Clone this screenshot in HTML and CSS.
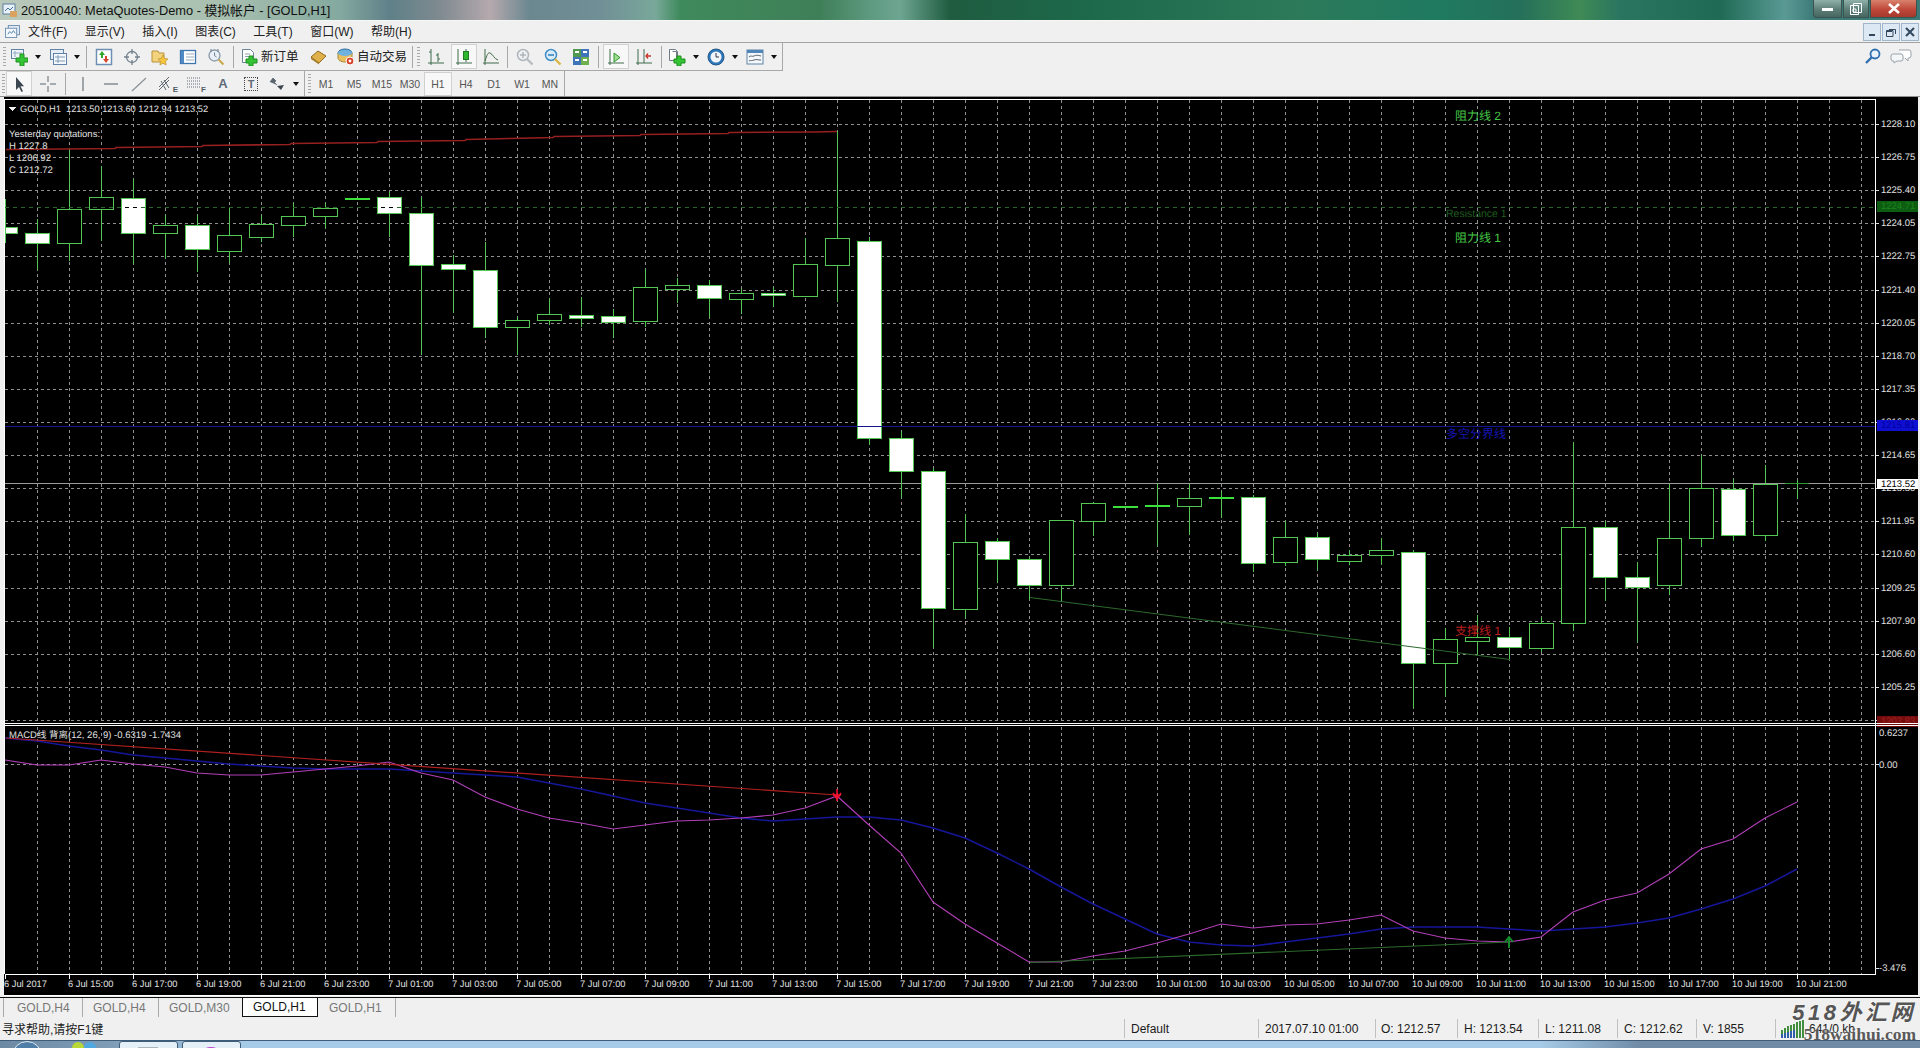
FILE: index.html
```html
<!DOCTYPE html>
<html lang="zh-CN">
<head>
  <meta charset="UTF-8" />
  <title>20510040: MetaQuotes-Demo - 模拟帐户 - [GOLD,H1]</title>
  <link rel="stylesheet" href="styles.css">
</head>
<body>

  <div class="titlebar">
    <svg class="app-icon" viewBox="0 0 16 16"><rect x="1" y="2" width="12" height="10" fill="#e8f0f8" stroke="#5f7f9f"/><path d="M3 9l3-3 2 2 3-3" fill="none" stroke="#3f6f9f"/><rect x="8" y="9" width="7" height="6" fill="#d9a35f"/></svg>
    <span class="title-text">20510040: MetaQuotes-Demo - 模拟帐户 - [GOLD,H1]</span>
    <div class="win-buttons">
      <span class="win-btn win-min"><i></i></span>
      <span class="win-btn win-max"><svg width="12" height="12" viewBox="0 0 12 12"><path d="M3.5 .5h8v9h-8zM.5 2.5h8v9h-8zM3 6h3v3H3z" fill="none" stroke="#fff"/></svg></span>
      <span class="win-btn win-close"><svg width="14" height="11" viewBox="0 0 14 11"><path d="M2 1l10 9M12 1L2 10" stroke="#fff" stroke-width="2.6"/></svg></span>
    </div>
  </div>

  <div class="menubar">
    <svg class="menu-icon" viewBox="0 0 16 14"><rect x="3.5" y=".5" width="12" height="10" fill="#dfe9f4" stroke="#6f8fb0"/><rect x=".5" y="3.5" width="12" height="10" fill="#f4f8fc" stroke="#6f8fb0"/><path d="M3 10l2-3 2 2 2-3 2 3" fill="none" stroke="#4f7fa8"/></svg>
    <span class="menu-item">文件(F)</span>
    <span class="menu-item">显示(V)</span>
    <span class="menu-item">插入(I)</span>
    <span class="menu-item">图表(C)</span>
    <span class="menu-item">工具(T)</span>
    <span class="menu-item">窗口(W)</span>
    <span class="menu-item">帮助(H)</span>
    <div class="mdi-buttons">
      <span class="mdi-btn"><svg width="10" height="10" viewBox="0 0 10 10"><rect x="2" y="7" width="6" height="2" fill="#33475c"/></svg></span>
      <span class="mdi-btn"><svg width="10" height="10" viewBox="0 0 10 10"><path d="M3 2.5h6.5v4.5M.5 3.5h6.5v6H.5z" fill="none" stroke="#33475c"/><rect x="1" y="4" width="5" height="1" fill="#33475c"/></svg></span>
      <span class="mdi-btn"><svg width="10" height="10" viewBox="0 0 10 10"><path d="M1 1l8 8M9 1L1 9" stroke="#33475c" stroke-width="2"/></svg></span>
    </div>
  </div>

  <div class="toolbar-row row-top">
    <div class="toolbar">
      <span class="grip"></span>
      <span class="btn btn-sm">
        <svg class="icon" viewBox="0 0 18 18"><rect x="1.500" y="1.500" width="12" height="9" fill="#eef4fa" stroke="#5f82a6"/><path d="M3 5h9M5 3v6" stroke="#8fa8c0"/><path d="M10 6h4v4h4v4h-4v4h-4v-4H6v-4h4z" fill="#35c435" stroke="#1c8f1c"/></svg>
      </span>
      <span class="caret"></span>
      <span class="spacer-2"></span>
      <span class="btn btn-sm">
        <svg class="icon" viewBox="0 0 18 18"><rect x="1.500" y="1.500" width="13" height="10" fill="#e6eef7" stroke="#5f82a6"/><rect x="4.500" y="5.500" width="13" height="11" fill="#f4f8fc" stroke="#5f82a6"/><path d="M6 9h10M6 13h10M9 7v8" stroke="#7f9bb8"/></svg>
      </span>
      <span class="caret"></span>
      <span class="sep"></span>
      <span class="btn">
        <svg class="icon" viewBox="0 0 18 18"><rect x="1.500" y="1.500" width="15" height="15" fill="#fff" stroke="#6d8fb3" stroke-width="1.500"/><path d="M7 3l3 4H8v3H6V7H4z" fill="#2ea82e"/><path d="M11 15l-3-4h2V8h2v3h2z" fill="#d5452f"/></svg>
      </span>
      <span class="btn">
        <svg class="icon" viewBox="0 0 18 18"><circle cx="9" cy="9" r="5.500" fill="none" stroke="#74808c" stroke-width="1.300"/><path d="M9 1v5M9 12v5M1 9h5M12 9h5" stroke="#74808c" stroke-width="1.300"/></svg>
      </span>
      <span class="btn">
        <svg class="icon" viewBox="0 0 18 18"><path d="M1 3h6l1 2h5v9H1z" fill="#f2d27a" stroke="#b8923c"/><path d="M12 7l1.600 3.400 3.400.5-2.500 2.400.6 3.700-3.100-1.800-3.100 1.800.6-3.700L7 10.900l3.400-.5z" fill="#f5c63c" stroke="#b8923c" stroke-width=".7"/></svg>
      </span>
      <span class="btn">
        <svg class="icon" viewBox="0 0 18 18"><rect x="1.500" y="2.500" width="15" height="13" fill="#fff" stroke="#3f78b0" stroke-width="1.300"/><rect x="2" y="3" width="3" height="12" fill="#4f8ac4"/><path d="M7 6h8M7 9h8M7 12h8" stroke="#9aa9b8"/></svg>
      </span>
      <span class="btn">
        <svg class="icon" viewBox="0 0 18 18"><circle cx="7.500" cy="7.500" r="5.500" fill="#e8eff6" stroke="#8a9aa8" stroke-width="1.300"/><path d="M4 1v3M11 1v3" stroke="#6d7f90"/><path d="M7.500 4.500v3l2 1.500" fill="none" stroke="#6d7f90"/><path d="M11.500 11.500l5 5" stroke="#c9a84a" stroke-width="2"/></svg>
      </span>
      <span class="sep"></span>
      <span class="btn btn-text">
        <svg class="icon" viewBox="0 0 18 18"><path d="M1.500 1.500h8l3 3v10h-11z" fill="#fff" stroke="#6d8499"/><path d="M4 6h5M4 8.500h5" stroke="#8fa0b0"/><path d="M8 8h4v3h4v4h-4v3H8v-3H5v-4h3z" fill="#35c435" stroke="#1c8f1c"/></svg>
        <span>新订单</span>
      </span>
      <span class="btn">
        <svg class="icon" viewBox="0 0 18 18"><path d="M1 9l7-6 8 5-7 7z" fill="#e0b04a" stroke="#8f6c20"/><path d="M1 9l8 6 0 1.500L1 11z" fill="#a87d28"/></svg>
      </span>
      <span class="btn btn-text btn-auto">
        <svg class="icon" viewBox="0 0 18 18"><ellipse cx="8" cy="5" rx="7" ry="4" fill="#5ea6d8" stroke="#33709f"/><path d="M1 5v5c0 2 3 4 7 4s7-2 7-4V5" fill="#e8c060" stroke="#a5862f"/><ellipse cx="8" cy="5" rx="7" ry="3" fill="#6fb2e0"/><circle cx="13" cy="13" r="4" fill="#d8422a" stroke="#fff"/><circle cx="13" cy="13" r="1.400" fill="#fff"/></svg>
        <span>自动交易</span>
      </span>
      <span class="sep"></span>
      <span class="grip grip-inner"></span>
      <span class="btn">
        <svg class="icon" viewBox="0 0 18 18"><path d="M4 1v16M1 15h16M4 4H2M11 5v9M11 7H9M11 11h2" fill="none" stroke="#3f6b4a"/></svg>
      </span>
      <span class="btn btn-on">
        <svg class="icon" viewBox="0 0 18 18"><path d="M3 1v16M1 15h16M11 1v13" fill="none" stroke="#3f6b4a"/><rect x="8.500" y="3.500" width="5" height="8" fill="#2fb82f" stroke="#1d7f1d"/></svg>
      </span>
      <span class="btn btn-narrow">
        <svg class="icon" viewBox="0 0 18 18"><path d="M3 1v16M1 15h16M3 13c2-6 3-9 5-8 3 1 4 6 8 7" fill="none" stroke="#3f6b4a"/></svg>
      </span>
      <span class="sep"></span>
      <span class="btn">
        <svg class="icon" viewBox="0 0 18 18"><circle cx="7" cy="7" r="5.500" fill="#eef0f2" stroke="#b0b6bb" stroke-width="1.500"/><path d="M4 7h6M7 4v6" stroke="#b0b6bb" stroke-width="1.500"/><path d="M11 11l5.500 5.500" stroke="#b8bcc0" stroke-width="2.400"/></svg>
      </span>
      <span class="btn">
        <svg class="icon" viewBox="0 0 18 18"><circle cx="7" cy="7" r="5.500" fill="#d8ecf9" stroke="#3f8ec6" stroke-width="1.500"/><path d="M4 7h6" stroke="#2f7fb8" stroke-width="1.500"/><path d="M11 11l5.500 5.500" stroke="#d9b84a" stroke-width="2.400"/></svg>
      </span>
      <span class="btn">
        <svg class="icon" viewBox="0 0 18 18"><rect x="1" y="1" width="8" height="8" fill="#4f9a4f"/><rect x="9" y="1" width="8" height="8" fill="#3f74b8"/><rect x="1" y="9" width="8" height="8" fill="#3f74b8"/><rect x="9" y="9" width="8" height="8" fill="#6fb04f"/><path d="M3 4h4M11 4h4M3 12h4M11 12h4" stroke="#fff" stroke-width="2"/></svg>
      </span>
      <span class="sep"></span>
      <span class="btn btn-on">
        <svg class="icon" viewBox="0 0 18 18"><path d="M3 1v16M1 15h16" fill="none" stroke="#3f6b4a"/><path d="M7 5l6 4.500L7 14z" fill="#9fdc8f" stroke="#2f9a2f"/></svg>
      </span>
      <span class="btn">
        <svg class="icon" viewBox="0 0 18 18"><path d="M3 1v16M1 15h16M9 1v14" fill="none" stroke="#3f6b4a"/><path d="M16 8l-5 0M13 5.500l-2 2.500 2 2.500" fill="none" stroke="#c8352a" stroke-width="1.300"/></svg>
      </span>
      <span class="sep"></span>
      <span class="btn btn-sm">
        <svg class="icon" viewBox="0 0 18 18"><path d="M1.500 1.500h6l2 2v9h-8z" fill="#fff" stroke="#6d7c88"/><path d="M4.500 3.500h4v8" fill="none" stroke="#6d7c88"/><path d="M9 8h4v3h4v4h-4v3H9v-3H6v-4h3z" fill="#35c435" stroke="#1c8f1c"/></svg>
      </span>
      <span class="caret"></span>
      <span class="spacer-2"></span>
      <span class="btn btn-sm">
        <svg class="icon" viewBox="0 0 18 18"><circle cx="9" cy="9" r="8" fill="#2f78b8" stroke="#1f5688"/><circle cx="9" cy="9" r="5.500" fill="#f2f6fa"/><path d="M9 5v4h3" fill="none" stroke="#334"/></svg>
      </span>
      <span class="caret"></span>
      <span class="spacer-2"></span>
      <span class="btn btn-sm">
        <svg class="icon" viewBox="0 0 18 18"><rect x="1" y="2" width="16" height="14" fill="#f4f8fc" stroke="#5f82a6"/><rect x="1" y="2" width="16" height="3" fill="#4f86b8"/><path d="M3 9c2-2 3 0 5-1s3-1 7 0M3 13c2-1 3 0 5-1s4 0 7 0" fill="none" stroke="#55606a"/></svg>
      </span>
      <span class="caret"></span>
    </div>
    <div class="tools-right">
      <svg class="icon" viewBox="0 0 18 18"><circle cx="11" cy="7" r="4.500" fill="#eaf3fb" stroke="#2f6fb0" stroke-width="1.800"/><path d="M8 10l-6 6" stroke="#2f6fb0" stroke-width="2.400"/></svg>
      <svg class="icon-bubbles" viewBox="0 0 22 16"><path d="M9 2h10a2 2 0 0 1 2 2v4a2 2 0 0 1-2 2h-1v3l-3-3" fill="#fff" stroke="#9aa3aa"/><path d="M3 6h8a2 2 0 0 1 2 2v3a2 2 0 0 1-2 2H7l-3 2v-2H3a2 2 0 0 1-2-2V8a2 2 0 0 1 2-2z" fill="#f4f6f7" stroke="#9aa3aa"/></svg>
    </div>
  </div>

  <div class="toolbar-row row-bottom">
    <div class="toolbar">
      <span class="grip"></span>
      <span class="btn btn-on btn-cursor">
        <svg class="icon" viewBox="0 0 18 18"><path d="M6 2v13l3-3 2.500 5 1.500-.7-2.500-5H14z" fill="#3b4650"/></svg>
      </span>
      <span class="btn">
        <svg class="icon" viewBox="0 0 18 18"><path d="M9 1v6M9 11v6M1 9h6M11 9h6" stroke="#5c6670"/></svg>
      </span>
      <span class="sep"></span>
      <span class="btn"><svg class="icon" viewBox="0 0 18 18"><path d="M9 2v14" stroke="#6a727a" stroke-width="1.200"/></svg></span>
      <span class="btn"><svg class="icon" viewBox="0 0 18 18"><path d="M2 9h14" stroke="#6a727a" stroke-width="1.200"/></svg></span>
      <span class="btn"><svg class="icon" viewBox="0 0 18 18"><path d="M2 16L16 3" stroke="#8a9198" stroke-width="1.200"/></svg></span>
      <span class="btn btn-letter"><svg class="icon" viewBox="0 0 18 18"><path d="M1 12L11 2M1 15L11 5M3 6l5 9M6 5l5 8" stroke="#5c6670" fill="none"/></svg><b>E</b></span>
      <span class="btn btn-letter"><svg class="icon" viewBox="0 0 18 18"><path d="M1 3h13M1 6h13M1 9h13M1 12h13" stroke="#666d74" stroke-dasharray="1 1"/></svg><b>F</b></span>
      <span class="btn btn-a">A</span>
      <span class="btn btn-t"><span>T</span></span>
      <span class="btn btn-sm">
        <svg class="icon" viewBox="0 0 18 18"><path d="M2 7l3-4 3 3-2 1 3 3" fill="#5c6670" stroke="#3b4650" stroke-width=".6"/><path d="M9 11l7-1-3 5z" fill="#3b4650"/></svg>
      </span>
      <span class="caret"></span>
    </div>
    <div class="toolbar toolbar-periods">
      <span class="grip"></span>
      <span class="tf">M1</span>
      <span class="tf">M5</span>
      <span class="tf">M15</span>
      <span class="tf">M30</span>
      <span class="tf tf-on">H1</span>
      <span class="tf">H4</span>
      <span class="tf">D1</span>
      <span class="tf">W1</span>
      <span class="tf">MN</span>
    </div>
  </div>

  <div class="workspace">
    <svg id="chart" class="chart" viewBox="4 97 1914 899"></svg>
  </div>

  <div class="tabs">
    <span class="tab tab-first">GOLD,H4</span>
    <span class="tab tab-h4">GOLD,H4</span>
    <span class="tab tab-m30">GOLD,M30</span>
    <span class="tab tab-on">GOLD,H1</span>
    <span class="tab tab-last">GOLD,H1</span>
  </div>

  <div class="statusbar">
    <span class="status-help">寻求帮助,请按F1键</span>
    <span class="cell cell-profile">Default</span>
    <span class="cell cell-date">2017.07.10 01:00</span>
    <span class="cell cell-o">O: 1212.57</span>
    <span class="cell cell-h">H: 1213.54</span>
    <span class="cell cell-l">L: 1211.08</span>
    <span class="cell cell-c">C: 1212.62</span>
    <span class="cell cell-v">V: 1855</span>
    <span class="cell cell-conn">
      <svg width="23" height="20" viewBox="0 0 23 20"><path d="M1 19V11M4 19V9M7 19V7M10 19V6M13 19V5M16 19V3M19 19V2M22 19V1" stroke="#3f8f3f" stroke-width="2"/><path d="M1 19v-4M4 19v-5M7 19v-6M10 19v-7M13 19v-8" stroke="#2f5fa8" stroke-width="2"/></svg>
      <span>641/0 kb</span>
    </span>
    <div class="watermark">
      <span class="wm-cn">518外汇网</span>
      <span class="wm-en">518waihui.com</span>
    </div>
  </div>

  <div class="taskbar">
    <span class="start-orb"></span>
    <span class="quick-dot dot-green"></span>
    <span class="quick-dot dot-blue"></span>
    <span class="task-btn"><i class="task-glyph glyph-grey"></i></span>
    <span class="task-btn"><i class="task-glyph glyph-pink"></i></span>
  </div>

  <script src="chart.js"></script>
</body>
</html>
```

FILE: styles.css
```css
* {
  box-sizing: border-box;
}

body {
  margin: 0;
  width: 1920px;
  height: 1048px;
  overflow: hidden;
  display: flex;
  flex-direction: column;
  background: #f0f0f0;
  font-family: "Liberation Sans", "Noto Sans CJK SC", sans-serif;
  color: #1a1a1a;
}

/* window title */
.titlebar {
  height: 21px;
  flex: none;
  display: flex;
  align-items: center;
  border-bottom: 1px solid #f4f8f4;
  background: linear-gradient(90deg, #b8c8ba 0, #a9c0b0 220px, #84a99f 340px, #5f8088 390px, #7f8a90 440px, #b5a9ad 490px, #6b8790 530px, #718f96 600px, #79a89a 655px, #3f8a5c 680px, #3f7f58 820px, #5d9a80 870px, #6ea592 900px, #1f5c40 950px, #1d6a4c 1100px, #2c7a5a 1300px, #1f7a60 1440px, #25705a 1520px, #3f8a55 1580px, #2a7560 1620px, #1f6a55 1720px, #5a9a95 1785px, #3c7a78 1814px);
}

.app-icon {
  width: 16px;
  height: 16px;
  margin-left: 2px;
}

.title-text {
  margin-left: 3px;
  padding-top: 1px;
  font-size: 12.8px;
  line-height: 20px;
  color: #111;
}

.win-buttons {
  margin-left: auto;
  margin-right: 3px;
  display: flex;
  height: 18px;
  align-self: flex-start;
  gap: 1px;
}

.win-btn {
  display: flex;
  align-items: center;
  justify-content: center;
  height: 18px;
  border: 1px solid #3a5450;
  border-top: none;
}

.win-min {
  width: 29px;
  border-radius: 0 0 0 4px;
  background: linear-gradient(#8fb0a8, #5d7f78 55%, #47665f);
}

.win-min i {
  display: block;
  width: 11px;
  height: 3px;
  margin-top: 2px;
  background: #fff;
}

.win-max {
  width: 26px;
  background: linear-gradient(#8fb0a8, #5d7f78 55%, #47665f);
}

.win-close {
  width: 47px;
  border-radius: 0 0 4px 0;
  background: linear-gradient(#d8826c, #c0483a 55%, #a4392c);
}

/* menu */
.menubar {
  height: 22px;
  flex: none;
  display: flex;
  align-items: center;
  border-bottom: 1px solid #a3a3a3;
  background: #f0f0f0;
  padding-left: 5px;
  font-size: 12px;
}

.menu-icon {
  width: 15px;
  height: 13px;
  margin-right: 8px;
}

.menu-item {
  margin-right: 17.500px;
  margin-top: -2px;
  white-space: nowrap;
  color: #222;
}

.mdi-buttons {
  margin-left: auto;
  display: flex;
  gap: 1px;
  margin-right: 1px;
}

.mdi-btn {
  display: flex;
  align-items: center;
  justify-content: center;
  width: 18px;
  height: 18px;
  border: 1px solid #9fb6cc;
  background: #dce8f4;
}

/* toolbars */
.toolbar-row {
  flex: none;
  display: flex;
  background: #f0f0f0;
  justify-content: flex-start;
}

.row-top {
  height: 28px;
}

.row-bottom {
  height: 26px;
  border-bottom: 1px solid #8f8f8f;
}

.toolbar {
  display: flex;
  align-items: center;
  padding-left: 3px;
  border-right: 1px solid #a8a8a8;
}

.row-top .toolbar {
  border-bottom: 1px solid #a8a8a8;
  width: 783px;
}

.row-bottom .toolbar {
  width: 305px;
  padding-left: 2px;
}

.row-bottom .toolbar-periods {
  width: 260px;
  padding-left: 3px;
}

.grip {
  flex: none;
  width: 3px;
  height: 19px;
  margin-right: 1px;
  background: repeating-linear-gradient(#a8a8a8 0, #a8a8a8 1px, transparent 1px, transparent 3px);
}

.grip-inner {
  margin: 0 2px 0 1px;
}

.btn {
  flex: none;
  display: flex;
  align-items: center;
  justify-content: center;
  position: relative;
  width: 28px;
  height: 25px;
}

.btn-sm {
  width: 24px;
}

.btn-narrow {
  width: 26px;
}

.btn-on {
  background: #f8f8f8;
  border: 1px solid #d0d0d0;
  width: 26px;
  margin: 0 1px;
}

.btn-cursor {
  margin: 0 2px 0 0;
}

.icon {
  width: 18px;
  height: 18px;
}

.caret {
  flex: none;
  width: 13px;
  display: flex;
  justify-content: center;
}

.caret::after {
  content: "";
  border-top: 4px solid #111;
  border-left: 3.500px solid transparent;
  border-right: 3.500px solid transparent;
}

.spacer-2 {
  width: 2px;
  flex: none;
}

.sep {
  flex: none;
  width: 7px;
  height: 22px;
  background: linear-gradient(#a8a8a8, #a8a8a8) center / 1px 100% no-repeat;
}

.btn-text {
  width: 68px;
  justify-content: flex-start;
  padding-left: 4px;
  font-size: 12.5px;
  gap: 2px;
  color: #222;
}

.btn-text span {
  margin-top: -2px;
}

.btn-auto {
  width: 76px;
  padding-left: 4px;
}

.btn-letter b {
  position: absolute;
  right: 3px;
  bottom: 2px;
  font-size: 8px;
  font-weight: bold;
  color: #4f5a64;
}

.btn-a {
  font-size: 13px;
  font-weight: bold;
  color: #5f6a78;
}

.btn-t span {
  width: 14px;
  height: 14px;
  display: flex;
  align-items: center;
  justify-content: center;
  border: 1px dotted #444;
  font-size: 11px;
  font-weight: bold;
  color: #5f6a78;
}

.tf {
  flex: none;
  width: 28px;
  height: 24px;
  display: flex;
  align-items: center;
  justify-content: center;
  font-size: 10.5px;
  color: #555;
}

.tf-on {
  background: #f8f8f8;
  border: 1px solid #d0d0d0;
}

.toolbar-periods .grip {
  margin-right: 1px;
}

.tools-right {
  margin-left: auto;
  display: flex;
  align-items: center;
  gap: 8px;
  padding-right: 8px;
  height: 26px;
}

.icon-bubbles {
  width: 22px;
  height: 16px;
}

/* chart area */
.workspace {
  flex: none;
  height: 900px;
  padding: 0 2px 1px 4px;
  background: #f0f0f0;
  border-left: 1px solid transparent;
}

.chart {
  display: block;
  width: 1914px;
  height: 899px;
  margin-left: -1px;
  background: #000;
  font-family: "Liberation Sans", "Noto Sans CJK SC", sans-serif;
  shape-rendering: crispEdges;
  text-rendering: geometricPrecision;
}

.chart text {
  font-size: 9.5px;
  fill: #e0e0e0;
}

.chart .label-cn {
  font-size: 12px;
}

.chart .curve {
  shape-rendering: auto;
  fill: none;
}

/* tabs */
.tabs {
  height: 20px;
  flex: none;
  display: flex;
  border-top: 1px solid #111;
  padding-left: 3px;
  font-size: 12px;
  background: #f0f0f0;
}

.tab {
  flex: none;
  display: flex;
  align-items: center;
  height: 19px;
  padding-left: 10px;
  color: #777;
  border-left: 1px solid #aaa;
}

.tab-first {
  width: 79px;
  padding-left: 13px;
}

.tab-h4 {
  width: 76px;
}

.tab-m30 {
  width: 84px;
}

.tab-on {
  width: 76px;
  background: #fff;
  color: #111;
  border-left: 1px solid #111;
  border-right: 1px solid #111;
  border-bottom: 1px solid #111;
}

.tab-last {
  width: 78px;
  padding-left: 11px;
  border-left: none;
  border-right: 1px solid #aaa;
}

/* status */
.statusbar {
  height: 23px;
  flex: none;
  position: relative;
  display: flex;
  align-items: center;
  font-size: 12px;
  padding-left: 2px;
  background: #f0f0f0;
}

.status-help {
  width: 1122px;
  color: #222;
}

.cell {
  display: flex;
  align-items: center;
  height: 19px;
  padding-left: 6px;
  border-left: 1px solid #c0c0c0;
  white-space: nowrap;
}

.cell-profile {
  width: 134px;
}

.cell-date {
  width: 117px;
}

.cell-o {
  width: 82px;
  padding-left: 5px;
}

.cell-h {
  width: 81px;
}

.cell-l {
  width: 79px;
}

.cell-c {
  width: 79px;
}

.cell-v {
  width: 79px;
}

.cell-conn {
  gap: 5px;
  padding-left: 5px;
  flex: 1;
}

.watermark {
  position: absolute;
  right: 4px;
  top: -15px;
  width: 132px;
  display: flex;
  flex-direction: column;
  align-items: flex-end;
}

.wm-cn {
  font-size: 22px;
  line-height: 22px;
  font-style: italic;
  font-weight: bold;
  letter-spacing: 3.500px;
  color: #555;
  text-shadow: 0 0 2px #fff;
}

.wm-en {
  margin-top: 3px;
  font-family: "Liberation Serif", serif;
  font-size: 17.500px;
  line-height: 14px;
  font-weight: bold;
  color: #5a5a5a;
  text-shadow: 0 0 2px #fff;
}

/* windows taskbar */
.taskbar {
  flex: 1;
  position: relative;
  display: flex;
  border-top: 1px solid #3f5c78;
  background: linear-gradient(90deg, #6c8aa4 0, #7f9cb6 110px, #a6cbe8 240px, #a6cbe8 1540px, #6f8ba6 1640px, #6f8ba6 1920px);
}

.start-orb {
  position: absolute;
  left: 12px;
  top: 0;
  width: 30px;
  height: 30px;
  border-radius: 50%;
  border: 1px solid #dfe8f0;
  background: #4f7fa8;
}

.quick-dot {
  position: absolute;
  top: 1px;
  width: 12px;
  height: 12px;
  border-radius: 50%;
}

.dot-green {
  left: 72px;
  background: #b8d838;
}

.dot-blue {
  left: 84px;
  background: #4fa8e0;
}

.task-btn {
  position: absolute;
  top: 0;
  width: 59px;
  height: 12px;
  border: 1px solid #3f5c78;
  border-radius: 3px 3px 0 0;
  background: #e4eff8;
}

.task-btn:nth-of-type(4) {
  left: 119px;
}

.task-btn:nth-of-type(5) {
  left: 182px;
}

.task-glyph {
  position: absolute;
  top: 5px;
  left: 18px;
  width: 20px;
  height: 8px;
}

.glyph-grey {
  background: #aab4bc;
}

.glyph-pink {
  border-radius: 50%;
  height: 14px;
  background: #c040d0;
}
```

FILE: chart.js
```js
const svg = document.getElementById('chart');
const NS = 'http://www.w3.org/2000/svg';

function add(tag, attrs, text) {
  const el = document.createElementNS(NS, tag);
  for (const k in attrs) el.setAttribute(k, attrs[k]);
  if (text !== undefined) el.textContent = text;
  svg.appendChild(el);
  return el;
}

function hLine(y, x1, x2, color, dash) {
  add('line', { x1, x2, y1: y + 0.5, y2: y + 0.5, stroke: color, 'stroke-dasharray': dash || 'none' });
}

function vLine(x, y1, y2, color, dash) {
  add('line', { x1: x + 0.5, x2: x + 0.5, y1, y2, stroke: color, 'stroke-dasharray': dash || 'none' });
}

function label(x, y, text, extra) {
  add('text', Object.assign({ x, y, 'dominant-baseline': 'central' }, extra), text);
}

const LEFT = 5, RIGHT = 1875, STEP = 32;
const GRID = '#909090', DASH = '3 3';
const GREEN = '#52c852';

// grid, top pane and macd pane
const prices = ['1228.10', '1226.75', '1225.40', '1224.05', '1222.75', '1221.40', '1220.05', '1218.70', '1217.35',
  '1216.00', '1214.65', '1213.30', '1211.95', '1210.60', '1209.25', '1207.90', '1206.60', '1205.25', '1203.90'];

prices.forEach((p, k) => {
  const y = Math.round(124 + 33.11 * k);
  hLine(y, LEFT, RIGHT, GRID, DASH);
  hLine(y, RIGHT, RIGHT + 4, '#ddd');
  if (k < 18) label(1881, y + 0.5, p);
});

for (let i = 1; i <= 58; i++) {
  const x = LEFT + STEP * i;
  vLine(x, 100, 722, GRID, DASH);
  vLine(x, 727, 974, GRID, DASH);
}

// current price sits behind the candles
hLine(483, LEFT, RIGHT, '#9a9a9a');

// yesterday's high line
add('polyline', {
  points: '6,149.500 115,148.500 116,147.500 202,146.500 203,145.500 290,144.500 291,143.500 377,142.500 378,141.500 465,140.500 466,139.500 553,137.500 554,136.500 640,135.500 641,134.500 728,133.500 729,132.500 815,132 837,131.500',
  class: 'curve', stroke: '#961f1f', 'stroke-width': 1.600
});

// [index, high, low, body top, body bottom, filled]
const candles = [
  [0, 199, 243, 227, 233, 1], [1, 219, 270, 233, 243, 1], [2, 150, 261, 209, 243, 0], [3, 166, 241, 197, 209, 0],
  [4, 179, 264, 198, 233, 1], [5, 215, 259, 225, 233, 0], [6, 215, 272, 225, 249, 1], [7, 208, 263, 235, 251, 0],
  [8, 215, 242, 224, 237, 0], [9, 203, 237, 216, 225, 0], [10, 203, 228, 208, 216, 0], [11, 199, 199, 199, 199, 2],
  [12, 192, 237, 197, 213, 1], [13, 197, 355, 213, 265, 1], [14, 255, 313, 264, 269, 1], [15, 242, 338, 270, 327, 1],
  [16, 317, 355, 320, 327, 0], [17, 298, 325, 314, 320, 0], [18, 297, 327, 315, 318, 1], [19, 309, 338, 316, 322, 1],
  [20, 269, 327, 287, 321, 0], [21, 278, 303, 285, 289, 0], [22, 280, 318, 285, 298, 1], [23, 289, 314, 293, 299, 0],
  [24, 287, 307, 293, 295, 1], [25, 238, 296, 264, 296, 0], [26, 131, 302, 238, 265, 0], [27, 237, 445, 241, 438, 1],
  [28, 431, 498, 438, 471, 1], [29, 468, 648, 471, 608, 1], [30, 514, 618, 542, 609, 0], [31, 538, 583, 541, 559, 1],
  [32, 557, 600, 559, 585, 1], [33, 520, 602, 520, 585, 0], [34, 502, 536, 503, 521, 0], [35, 507, 507, 507, 507, 2],
  [36, 483, 546, 506, 506, 2], [37, 484, 535, 498, 506, 0], [38, 491, 518, 498, 498, 2], [39, 495, 572, 497, 563, 1],
  [40, 521, 566, 537, 562, 0], [41, 533, 570, 537, 559, 1], [42, 550, 565, 555, 561, 0], [43, 538, 564, 550, 555, 0],
  [44, 550, 708, 552, 663, 1], [45, 628, 697, 639, 663, 0], [46, 615, 655, 637, 641, 0], [47, 627, 660, 637, 647, 1],
  [48, 617, 652, 623, 648, 0], [49, 442, 631, 527, 623, 0], [50, 521, 601, 527, 577, 1], [51, 562, 642, 577, 587, 1],
  [52, 484, 595, 538, 585, 0], [53, 455, 547, 488, 538, 0], [54, 479, 541, 489, 535, 1], [55, 465, 541, 484, 535, 0],
  [56, 480, 499, 483, 483, 3]
];

candles.forEach(([i, high, low, top, bottom, kind]) => {
  const x = LEFT + STEP * i;
  if (high < low) vLine(x, high, low, GREEN);
  if (kind === 2) {
    add('rect', { x: Math.max(x - 12, LEFT), y: top - 1, width: 25, height: 2, fill: '#3be03b' });
  } else if (kind === 3) {
    hLine(top, x - 12, x + 12, '#2f9a2f');
  } else {
    const bx = Math.max(x - 12, LEFT) + 0.5;
    add('rect', {
      x: bx, y: top + 0.5, width: x + 12 - bx + 0.5, height: bottom - top,
      fill: kind === 1 ? '#fff' : '#000', stroke: GREEN
    });
  }
});

// level lines over the candles
hLine(207, LEFT, RIGHT, '#2c632c', '4 4');
hLine(207, 125, 141, '#000', '4 4');
hLine(207, 381, 397, '#000', '4 4');
add('line', { x1: 1030, y1: 597.500, x2: 1510, y2: 659.500, stroke: '#2c6a2c', class: 'curve' });
hLine(426, LEFT, RIGHT, '#14148c');

// on-chart labels
label(1455, 116, '阻力线 2', { style: 'fill:#46c846', class: 'label-cn' });
label(1446, 214, 'Resistance 1', { style: 'fill:#1f5c1f;font-size:10.500px' });
label(1455, 238, '阻力线 1', { style: 'fill:#46c846', class: 'label-cn' });
label(1446, 434, '多空分界线', { style: 'fill:#1515b8', class: 'label-cn' });
label(1455, 631, '支撑线 1', { style: 'fill:#b81e1e', class: 'label-cn' });

// header texts
add('path', { d: 'M8 107h8l-4 4z', fill: '#eee' });
label(20, 109, 'GOLD,H1  1213.50 1213.60 1212.94 1213.52', { style: 'white-space:pre;font-size:9.300px' });
label(9, 134, 'Yesterday quotations:');
label(9, 146, 'H 1227.8');
label(9, 158, 'L 1206.92');
label(9, 170, 'C 1212.72');

// price tags on the axis
[[201, 11, '#0c5c12', '#1c861c', '1224.71'], [420, 11, '#0f0fd2', '#00009e', '1215.81'],
 [479, 10, '#fff', '#000', '1213.52'], [716, 11, '#740c0c', '#a02222', '1203.83']].forEach(([y, h, bg, fg, t]) => {
  add('rect', { x: 1877, y, width: 41, height: h, fill: bg });
  add('text', { x: 1881, y: y + h / 2, 'dominant-baseline': 'central', style: 'fill:' + fg }, t);
});

// macd pane frame
hLine(723, LEFT, 1918, '#fff');
hLine(725, LEFT, 1918, '#fff');
hLine(99, LEFT, RIGHT, '#fff');
vLine(4, 99, 974, '#fff');
vLine(RIGHT, 99, 975, '#fff');
hLine(974, LEFT, RIGHT + 1, '#fff');
hLine(995, 4, 1918, '#fff');
hLine(764, LEFT, RIGHT, GRID, DASH);
hLine(764, RIGHT, RIGHT + 4, '#ddd');
hLine(968, RIGHT, RIGHT + 4, '#ddd');
label(1879, 733, '0.6237');
label(1879, 765, '0.00');
label(1879, 968, '-3.476');

const purple = [760, 765, 765, 760, 764, 767, 773, 775, 775, 772, 769, 766, 762, 773, 780, 797, 809, 818, 823, 829,
  825, 821, 820, 818, 815, 808, 796, 825, 853, 902, 924, 943, 962, 962, 956, 951, 943, 934, 924, 928, 925, 924, 920,
  915, 931, 938, 941, 942, 937, 912, 900, 893, 874, 849, 839, 818, 802];
const blue = [738, 741, 746, 750, 755, 758, 761, 764, 766, 768, 769, 769, 769, 771, 773, 775, 777, 783, 789, 796,
  803, 808, 813, 818, 821, 819, 817, 817, 820, 828, 838, 853, 869, 887, 904, 919, 934, 942, 945, 946, 942, 938, 934,
  929, 927, 927, 927, 929, 931, 929, 927, 923, 918, 909, 899, 886, 869];

function curve(values, color, width) {
  const points = values.map((y, i) => (LEFT + STEP * i) + ',' + y).join(' ');
  add('polyline', { points, class: 'curve', stroke: color, 'stroke-width': width });
}

curve(blue, '#16169a', 1.500);
curve(purple, '#b23fb8', 1.100);
add('line', { x1: 6, y1: 738, x2: 837, y2: 795, class: 'curve', stroke: '#b02020', 'stroke-width': 1.200 });
add('line', { x1: 1030, y1: 962.500, x2: 1509, y2: 942, class: 'curve', stroke: '#2c6a2c', 'stroke-width': 1.200 });
add('path', { d: 'M837 789v12M833 793l4 6 4-6M833 795h8', stroke: '#f01030', 'stroke-width': 1.600, class: 'curve' });
add('path', { d: 'M1509 948v-11M1505 942l4-5 4 5', stroke: '#148a2c', 'stroke-width': 2, class: 'curve' });
label(9, 735, 'MACD线 背离(12, 26, 9) -0.6319 -1.7434');

// time axis
const times = ['6 Jul 2017', '6 Jul 15:00', '6 Jul 17:00', '6 Jul 19:00', '6 Jul 21:00', '6 Jul 23:00'];
['7 Jul', '10 Jul'].forEach((d, n) => {
  for (let h = 1; h <= (n ? 21 : 23); h += 2) times.push(d + ' ' + String(h).padStart(2, '0') + ':00');
});
times.forEach((t, k) => {
  const x = LEFT + 64 * k;
  vLine(x, 974, 979, '#fff');
  label(x - 1, 983.500, t, { style: 'font-size:9.300px' });
});
```
